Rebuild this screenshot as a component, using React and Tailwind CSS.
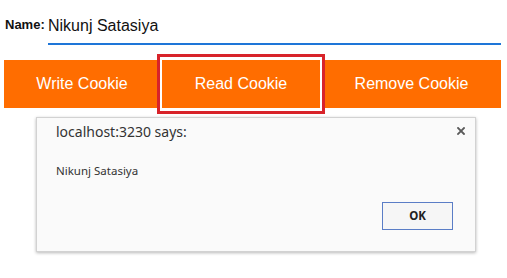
import React from "react";

export default function App() {
  return (
    <div className="relative w-[507px] h-[278px] overflow-hidden bg-white font-['Liberation_Sans',Arial,sans-serif]">
      {/* Name row */}
      <div className="flex items-start pl-[5px] pt-[17px]">
        <span className="w-[43px] text-[13px] leading-[15px] font-bold text-[#111]">Name:</span>
        <div className="w-[453px] border-b-2 border-[#1e76d8] pb-[8px] text-[16px] leading-[18px] text-[#111]">
          Nikunj Satasiya
        </div>
      </div>

      {/* Button bar */}
      <div className="ml-[4px] mt-[15px] flex h-[48px] w-[497px] bg-[#ff6d00]">
        <button className="w-[156px] text-[16px] text-white">Write Cookie</button>
        <button className="-my-[3px] w-[162px] border-x-2 border-y-[3px] border-white bg-[#ff6d00] text-[16px] text-white outline-[3px] outline-solid outline-[#d8232a]">
          Read Cookie
        </button>
        <button className="flex-1 text-[16px] text-white">Remove Cookie</button>
      </div>

      {/* Alert dialog */}
      <div className="absolute left-[36px] top-[117px] flex h-[135px] w-[440px] flex-col border border-[#d2d2d2] bg-[#fafafa] shadow-[0_1px_3px_rgba(0,0,0,0.28)] font-['Noto_Sans',sans-serif]">
        <svg className="absolute right-[10px] top-[9px]" width="8" height="8" viewBox="0 0 8 8">
          <path d="M1 1L7 7M7 1L1 7" stroke="#5a5a5a" strokeWidth="1.8" strokeLinecap="square" />
        </svg>
        <div className="pl-[19px] pt-[4px] text-[14px] leading-[20px] text-[#333]">localhost:3230 says:</div>
        <div className="mt-[21px] pl-[19px] text-[11.5px] leading-[16px] text-[#333]">Nikunj Satasiya</div>
        <div className="mt-[23px] flex justify-end pr-[22px]">
          <button className="h-[28px] w-[71px] border border-[#5a7dc6] bg-[#f6f6f6] text-[11.5px] font-bold text-[#222]">
            OK
          </button>
        </div>
      </div>
    </div>
  );
}
